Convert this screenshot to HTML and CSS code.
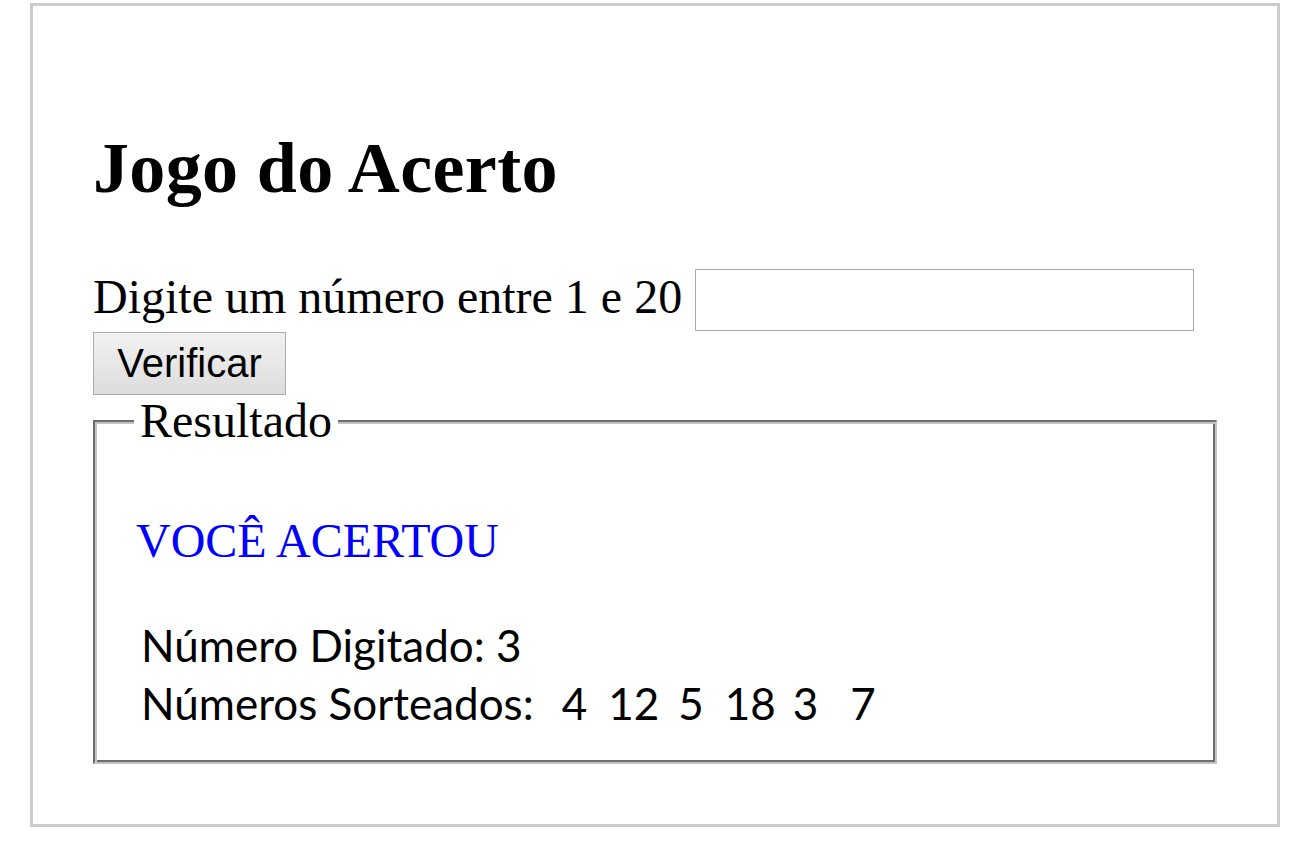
FILE: index.html
```html
<!DOCTYPE html>
<html lang="pt-BR">
<head>
<meta charset="utf-8">
<title>Jogo do Acerto</title>
<link rel="stylesheet" href="styles.css">
</head>
<body>
<main class="page">
  <h1 class="title">Jogo do Acerto</h1>
  <div class="ask">
    <label class="ask-label" for="num">Digite um número entre 1 e 20</label>
    <input class="ask-input" id="num" type="text">
  </div>
  <button class="btn" type="button">Verificar</button>
  <fieldset class="result">
    <legend class="result-legend">Resultado</legend>
    <p class="hit">VOCÊ ACERTOU</p>
    <div class="info">
      <div class="info-line">Número Digitado: 3</div>
      <div class="info-line">Números Sorteados:<span class="n n1">4</span><span class="n n2">12</span><span class="n n3">5</span><span class="n n4">18</span><span class="n n5">3</span><span class="n n6">7</span></div>
    </div>
  </fieldset>
</main>
</body>
</html>
```

FILE: styles.css
```css
html, body {
  margin: 0;
  padding: 0;
  background: #ffffff;
}

body {
  font-family: "Liberation Serif", "Times New Roman", serif;
  color: #000000;
}

.page {
  box-sizing: border-box;
  width: 1250px;
  margin: 3px 0 0 30px;
  border: 3px solid #cccccc;
  padding: 122px 60px 60px 60px;
}

.title {
  margin: 0;
  font-size: 72px;
  line-height: 80px;
  font-weight: bold;
  letter-spacing: 0.35px;
}

.ask {
  display: flex;
  align-items: flex-start;
  margin-top: 61px;
  height: 62px;
}

.ask-label {
  font-size: 48px;
  line-height: 56px;
  white-space: nowrap;
}

.ask-input {
  box-sizing: border-box;
  width: 499px;
  height: 62px;
  margin: 0 0 0 13px;
  border: 1px solid #a9a9a9;
  padding: 0 6px;
  font-size: 40px;
  background: #ffffff;
  outline: none;
}

.btn {
  display: block;
  box-sizing: border-box;
  width: 193px;
  height: 63px;
  margin: 1px 0 0 0;
  padding: 0;
  border: 1px solid #acacac;
  background: linear-gradient(#f2f2f2, #dcdcdc);
  font-family: "Liberation Sans", Arial, sans-serif;
  font-size: 40px;
  color: #000000;
}

.result {
  box-sizing: border-box;
  margin: 2px 0 0 0;
  padding: 0 39px 30px 39px;
  border: 2px solid;
  border-color: #6e6e6e #c2c2c2 #c2c2c2 #6e6e6e;
  box-shadow: inset 2px 2px 0 #c2c2c2, inset -2px -2px 0 #6e6e6e;
  min-width: 0;
}

.result-legend {
  padding: 0 6px;
  font-size: 48px;
  line-height: 48px;
  background: #ffffff;
}

.hit {
  margin: 68px 0 0 0;
  padding-left: 2px;
  color: #0000ff;
  font-size: 48px;
  line-height: 56px;
}

.info {
  margin-top: 47px;
  padding-left: 7px;
  font-family: Lato, "Open Sans", sans-serif;
  font-size: 44px;
  line-height: 58px;
}

.info-line {
  white-space: nowrap;
}

.n1 { margin-left: 28px; }
.n2 { margin-left: 21px; }
.n3 { margin-left: 19px; }
.n4 { margin-left: 21px; }
.n5 { margin-left: 17px; }
.n6 { margin-left: 32px; }
```
